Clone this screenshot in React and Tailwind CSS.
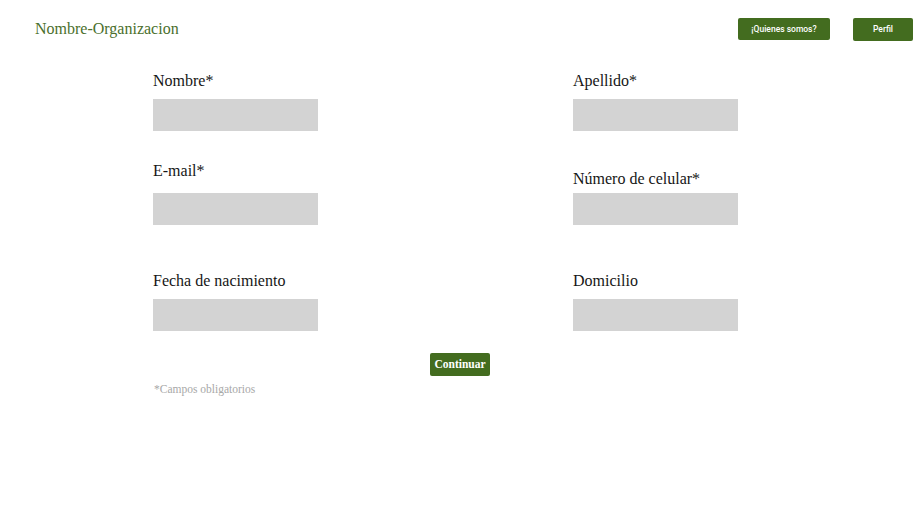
import { useState } from 'react'

const serif = { fontFamily: '"Liberation Serif", "Times New Roman", serif' }

function Field({ label, labelClass = 'mb-[8px]', value, onChange }) {
  return (
    <div className="flex flex-col">
      <label className={`text-[16px] leading-[20px] text-[#161616] ${labelClass}`}>{label}</label>
      <input
        value={value}
        onChange={onChange}
        className="w-[165px] h-[32px] bg-[#d3d3d3] outline-none px-2 text-sm"
      />
    </div>
  )
}

export default function App() {
  const [form, setForm] = useState({
    nombre: '',
    apellido: '',
    email: '',
    celular: '',
    nacimiento: '',
    domicilio: '',
  })

  const set = (key) => (e) => setForm({ ...form, [key]: e.target.value })

  return (
    <div className="w-[917px] h-[517px] bg-white relative" style={serif}>
      {/* Header */}
      <header className="flex items-center justify-between h-[58px] pl-[35px] pr-[4px]">
        <h1 className="text-[16px] text-[#4a6f2c]">Nombre-Organizacion</h1>
        <nav className="flex items-center gap-[23px]" style={{ fontFamily: 'Roboto, "Liberation Sans", Arial, sans-serif' }}>
          <button className="w-[92px] h-[22px] rounded-[2px] bg-[#436c1f] text-white text-[8.5px] font-medium">
            ¡Quienes somos?
          </button>
          <button className="w-[60px] h-[23px] rounded-[2px] bg-[#436c1f] text-white text-[8.5px] font-medium">
            Perfil
          </button>
        </nav>
      </header>

      {/* Form */}
      <form className="w-[611px] mx-auto mt-[13px]" onSubmit={(e) => e.preventDefault()}>
        <div className="grid grid-cols-[420px_1fr] items-end">
          <Field label="Nombre*" value={form.nombre} onChange={set('nombre')} />
          <Field label="Apellido*" value={form.apellido} onChange={set('apellido')} />
        </div>

        <div className="grid grid-cols-[420px_1fr] items-end mt-[30px]">
          <Field label="E-mail*" labelClass="mb-[12px]" value={form.email} onChange={set('email')} />
          <Field label="Número de celular*" labelClass="mb-[4px]" value={form.celular} onChange={set('celular')} />
        </div>

        <div className="grid grid-cols-[420px_1fr] items-end mt-[46px]">
          <Field label="Fecha de nacimiento" value={form.nacimiento} onChange={set('nacimiento')} />
          <Field label="Domicilio" value={form.domicilio} onChange={set('domicilio')} />
        </div>

        <div className="flex justify-center mt-[22px] pl-[3px]">
          <button
            type="submit"
            className="w-[60px] h-[23px] rounded-[2px] bg-[#436c1f] text-white text-[11.5px] font-bold"
          >
            Continuar
          </button>
        </div>

        <p className="mt-[5px] ml-[1px] text-[11.5px] leading-[16px] text-[#a8a8a8]">*Campos obligatorios</p>
      </form>
    </div>
  )
}
